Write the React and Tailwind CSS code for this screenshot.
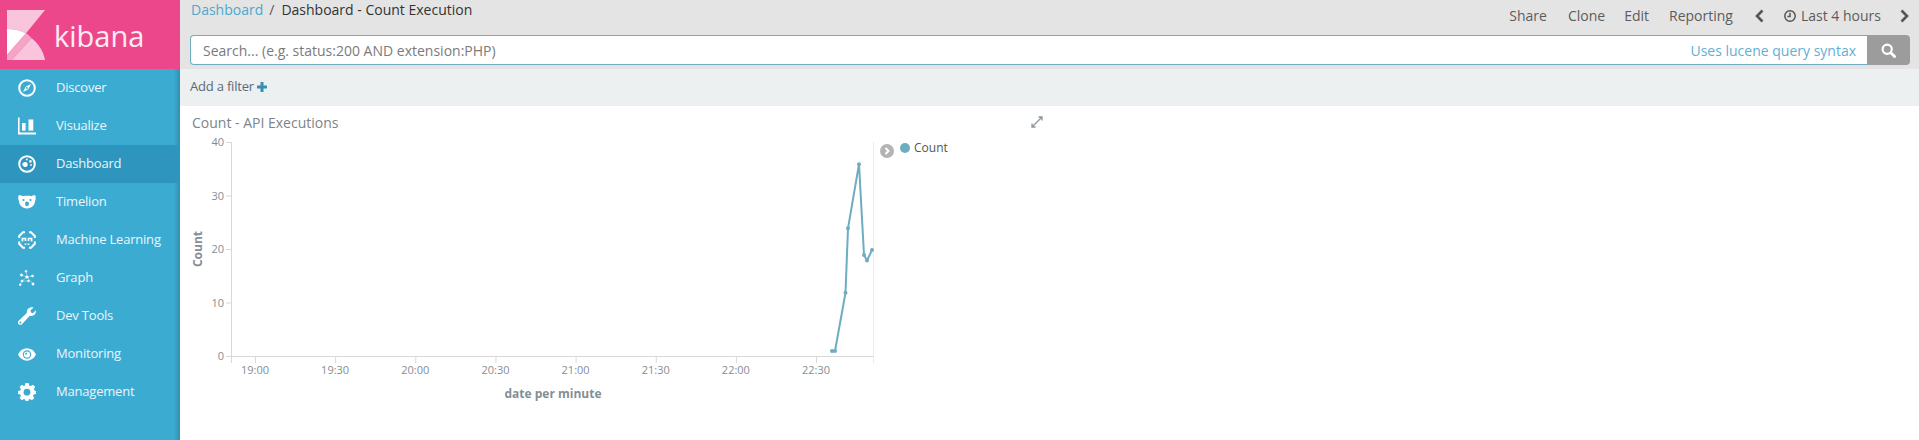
import React from "react";

const Compass = () => (
  <svg width="18" height="18" viewBox="0 0 18 18" fill="none">
    <circle cx="9" cy="9" r="7.8" stroke="#fff" strokeWidth="2" />
    <path d="M13 5 L10.3 10.3 L5 13 L7.7 7.7 Z" fill="#fff" />
    <circle cx="9" cy="9" r="1" fill="#3cabd2" />
  </svg>
);
const Bars = () => (
  <svg width="18" height="18" viewBox="0 0 18 18" fill="#fff">
    <path d="M0 0.5h1.6V15.6H18V17.4H0Z" />
    <rect x="4" y="6" width="3.6" height="7.6" />
    <rect x="10.5" y="2.5" width="4.8" height="11.1" />
  </svg>
);
const Gauge = () => (
  <svg width="18" height="18" viewBox="0 0 18 18" fill="none">
    <circle cx="9" cy="9" r="7.8" stroke="#fff" strokeWidth="2" />
    <path d="M4.4 8.2 L6.6 7 C8.4 6.6 10 8 9.7 10 C9.4 11.6 7.6 12.6 6 11.8 C4.6 11 4.2 9.4 4.4 8.2Z" fill="#fff" />
    <circle cx="8.8" cy="4.6" r="1" fill="#fff" />
    <circle cx="12.4" cy="6.4" r="1.3" fill="#fff" />
    <circle cx="13" cy="10" r="0.9" fill="#fff" />
  </svg>
);
const Bear = () => (
  <svg width="18" height="14" viewBox="0 0 18 14" fill="#fff">
    <path d="M0.5 0.5 C2 -0.2 3.5 0.3 4.5 1.2 C7 0.6 11 0.6 13.5 1.2 C14.5 0.3 16 -0.2 17.5 0.5 C18 3 17.6 5 17 6 C17 9.5 14 13.5 9 13.5 C4 13.5 1 9.5 1 6 C0.4 5 0 3 0.5 0.5Z" />
    <circle cx="5.5" cy="5" r="1.1" fill="#3cabd2" />
    <circle cx="12.5" cy="5" r="1.1" fill="#3cabd2" />
    <ellipse cx="9" cy="8.8" rx="2" ry="2.4" fill="#3cabd2" />
  </svg>
);
const Brain = () => (
  <svg width="18" height="18" viewBox="0 0 18 18" fill="none" stroke="#fff" strokeWidth="2" strokeLinecap="butt">
    <path d="M7 1.3 H5 L1.2 5 V7 M1.2 10.5 V12.8 L5 16.7 H7" />
    <path d="M11 1.3 H13 L16.8 5 V7 M16.8 10.5 V12.8 L13 16.7 H11" />
    <path d="M4.4 10.5 V7.5 H7.5 V10 M13.6 10.5 V7.5 H10.5 V10 M7.5 12.5 V14 M10.5 12.5 V14" strokeWidth="1.7" />
  </svg>
);
const GraphIcon = () => (
  <svg width="16" height="16" viewBox="0 0 16 16" fill="#fff" stroke="#fff" strokeWidth="0.5">
    <path d="M7 1 L8 7 L2.5 5 M8 7 L13 6 M8 7 L3 11 L1 15 M8 7 L14 14 M3 11 L9 11" fill="none" strokeOpacity="0.8" />
    <circle cx="7" cy="1.3" r="1" />
    <circle cx="2.5" cy="5" r="1.2" />
    <circle cx="8" cy="7" r="1.3" />
    <circle cx="13.5" cy="6" r="1.1" />
    <circle cx="3" cy="11" r="1.1" />
    <circle cx="9.5" cy="11" r="0.9" />
    <circle cx="1.2" cy="14.7" r="1" />
    <circle cx="14" cy="14" r="1.2" />
  </svg>
);
const Wrench = () => (
  <svg width="18" height="18" viewBox="0 0 18 18" fill="#fff">
    <path d="M12.9 0.3 C14 0.1 15 0.3 15.6 0.6 L12.4 3.6 L13 5.6 L15 6.2 L17.8 3.2 C18.2 5 17.6 6.8 16.2 8 C14.8 9.1 13.1 9.2 11.8 8.8 L4.2 17 C3 18.3 1 18 0.3 16.8 C-0.3 15.8 -0.1 14.6 0.7 13.8 L8.8 6.1 C8.4 3.4 10 0.9 12.9 0.3Z" />
    <circle cx="2.4" cy="15.6" r="1" fill="#3cabd2" />
  </svg>
);
const Eye = () => (
  <svg width="18" height="13" viewBox="0 0 18 13" fill="#fff">
    <path d="M0 6.5 C2 2.5 5.2 0.3 9 0.3 C12.8 0.3 16 2.5 18 6.5 C16 10.5 12.8 12.7 9 12.7 C5.2 12.7 2 10.5 0 6.5Z" />
    <circle cx="9" cy="6.5" r="4.2" fill="#3cabd2" />
    <circle cx="9" cy="6.5" r="3.1" fill="#fff" />
    <path d="M9 4.6 A1.9 1.9 0 0 0 7.1 6.5 L9 6.5Z" fill="#3cabd2" />
  </svg>
);
const Gear = () => (
  <svg width="18" height="18" viewBox="0 0 18 18" fill="#fff">
    <path fillRule="evenodd" d="M7.3 0 H10.7 L11.2 2.4 L12.9 3.1 L15 1.8 L17.2 4.1 L15.9 6.1 L16.6 7.8 L18 8 V11 L15.7 11.4 L15 13 L16.3 15.1 L14 17.3 L12 16 L10.8 16.5 L10.4 18 H7.6 L7.1 16.4 L5.8 15.9 L3.9 17.3 L1.6 15 L2.9 13 L2.3 11.4 L0 11 V8 L2.3 7.6 L2.9 6 L1.6 4 L3.9 1.7 L5.9 3 L6.9 2.5 Z M9 5.8 A3.4 3.4 0 1 0 9 12.6 A3.4 3.4 0 1 0 9 5.8Z" />
  </svg>
);

const navItems = [
  ["Discover", Compass],
  ["Visualize", Bars],
  ["Dashboard", Gauge, true],
  ["Timelion", Bear],
  ["Machine Learning", Brain],
  ["Graph", GraphIcon],
  ["Dev Tools", Wrench],
  ["Monitoring", Eye],
  ["Management", Gear],
];

const Logo = () => (
  <svg width="40" height="52" viewBox="0 0 40 52">
    <path d="M1 1 H39 L20 24.3 C14 21.5 8 20 1 20Z" fill="#f9c5dc" />
    <path d="M1 20 C8 20 14 21.5 20 24.3 L1 46Z" fill="#fff" />
    <path d="M20 24.3 C22 25.5 24 27.3 25.7 29.3 L5.7 51 H1 V46Z" fill="#f5a3c6" />
    <path d="M25.7 29.3 C32 34.5 37.5 42 39 51 H5.7Z" fill="#f9c5dc" />
  </svg>
);

const yTicks = [[40, 142], [30, 195.5], [20, 249], [10, 302.5], [0, 356]];
const xTicks = ["19:00", "19:30", "20:00", "20:30", "21:00", "21:30", "22:00", "22:30"];
const pts = [[832, 351], [835, 351], [845.5, 292.7], [848, 228.3], [859, 164.2], [864, 255], [867, 260.5], [872, 250]];

const Chart = () => (
  <svg width="700" height="290" viewBox="180 120 700 290" className="block shrink-0" fontFamily="'Open Sans', sans-serif">
    <g stroke="#d9d9d9" strokeWidth="1" fill="none">
      <path d="M231.5 142 V363" />
      <path d="M873.5 142 V363" stroke="#ececec" />
      <path d="M231.5 356.5 H873.5" />
      {yTicks.map(([v, y]) => (
        <path key={v} d={`M226 ${y + 0.5} H231`} />
      ))}
      {xTicks.map((t, i) => (
        <path key={t} d={`M${255.5 + i * 80.15} 357 V363`} />
      ))}
    </g>
    <g fill="#848e96" fontSize="11">
      {yTicks.map(([v, y]) => (
        <text key={v} x="224" y={y + 4} textAnchor="end">{v}</text>
      ))}
      {xTicks.map((t, i) => (
        <text key={t} x={255 + i * 80.15} y="374" textAnchor="middle">{t}</text>
      ))}
    </g>
    <text x="0" y="0" transform="translate(202 249) rotate(-90)" textAnchor="middle" fontSize="12" fontWeight="700" fill="#848e96">Count</text>
    <text x="553" y="398" textAnchor="middle" fontSize="12" fontWeight="700" fill="#848e96">date per minute</text>
    <polyline points={pts.map((p) => p.join(",")).join(" ")} fill="none" stroke="#6eadc1" strokeWidth="2" strokeLinejoin="round" />
    {pts.map((p, i) => (
      <circle key={i} cx={p[0]} cy={p[1]} r="2" fill="#6eadc1" />
    ))}
  </svg>
);

export default function App() {
  return (
    <div className="flex h-[440px] w-full overflow-hidden bg-white font-['Open_Sans',sans-serif] text-[14px]">
      <aside className="z-10 flex w-[180px] shrink-0 flex-col bg-[#3cabd2] shadow-[inset_-6px_0_5px_-4px_rgba(0,0,0,0.22)]">
        <div className="flex h-[69px] items-center bg-[#ec478b] pl-[6px]">
          <Logo />
          <span className="ml-[8px] pt-[1px] text-[29px] leading-none text-white/90">kibana</span>
        </div>
        {navItems.map(([label, Icon, active]) => (
          <div key={label} className={`flex h-[38px] items-center text-[13px] tracking-[-0.2px] text-[#eaf6fb] ${active ? "bg-[#2d95be]" : ""}`}>
            <div className="flex w-[56px] items-center justify-center pr-[2px]">
              <Icon />
            </div>
            <span className="pb-[1px]">{label}</span>
          </div>
        ))}
      </aside>
      <main className="flex min-w-0 flex-1 flex-col">
        <div className="h-[69px] shrink-0 bg-[#e4e4e4]">
          <div className="flex h-[35px] items-start justify-between text-[#444]">
            <div className="flex items-center pl-[11px] leading-[19px]">
              <span className="text-[#4da8cd]">Dashboard</span>
              <span className="ml-[6px] mr-[7px] text-[#555]">/</span>
              <span className="text-[#333]">Dashboard - Count Execution</span>
            </div>
            <div className="flex items-center pt-[6px] leading-[19px] text-[#5c5c5c]">
              <span>Share</span>
              <span className="ml-[21px]">Clone</span>
              <span className="ml-[19px]">Edit</span>
              <span className="ml-[20px]">Reporting</span>
              <svg className="ml-[22px]" width="9" height="14" viewBox="0 0 9 14" fill="none" stroke="#555" strokeWidth="2.6"><path d="M7.5 1.5 L2 7 L7.5 12.5" /></svg>
              <svg className="ml-[20px]" width="12" height="12" viewBox="0 0 12 12" fill="none" stroke="#555" strokeWidth="1.5"><circle cx="6" cy="6" r="5.2" /><path d="M6 2.8 V6.5 H3.4" /></svg>
              <span className="ml-[5px]">Last 4 hours</span>
              <svg className="ml-[19px] mr-[10px]" width="9" height="14" viewBox="0 0 9 14" fill="none" stroke="#555" strokeWidth="2.6"><path d="M1.5 1.5 L7 7 L1.5 12.5" /></svg>
            </div>
          </div>
          <div className="mx-[10px] mr-[9px] flex h-[30px]">
            <div className="flex min-w-0 flex-1 items-center justify-between rounded-l-[4px] border border-r-0 border-[#6eadc1] bg-white pl-[12px] pr-[11px]">
              <span className="text-[#7b7b7b]">Search... (e.g. status:200 AND extension:PHP)</span>
              <span className="text-[#5fb0d4]">Uses lucene query syntax</span>
            </div>
            <div className="flex w-[43px] items-center justify-center rounded-r-[4px] bg-[#9c9c9c]">
              <svg width="15" height="15" viewBox="0 0 15 15" fill="none" stroke="#fff"><circle cx="6.2" cy="6.2" r="4.6" strokeWidth="2.2" /><path d="M9.8 9.8 L13.6 13.6" strokeWidth="2.8" strokeLinecap="round" /></svg>
            </div>
          </div>
        </div>
        <div className="flex h-[37px] shrink-0 items-center bg-[#ecf0f1] pb-[1px] pl-[10px] text-[13px] tracking-[-0.2px] text-[#5a6b75]">
          <span>Add a filter</span>
          <svg className="ml-[3px]" width="10" height="10" viewBox="0 0 10 10" fill="#3a8fb0"><path d="M3.5 0 H6.5 V3.5 H10 V6.5 H6.5 V10 H3.5 V6.5 H0 V3.5 H3.5Z" /></svg>
        </div>
        <div className="relative flex-1">
          <div className="pl-[12px] pt-[7px] leading-[19px] text-[#7b858c]">Count - API Executions</div>
          <div className="absolute left-0 top-[14px] flex items-start">
            <Chart />
            <div className="flex items-center pt-[20px] text-[12px] leading-[16px] text-[#555]">
              <span className="flex h-[14px] w-[14px] translate-y-[3px] items-center justify-center rounded-full bg-[#b4b4b4]">
                <svg width="7" height="8" viewBox="0 0 7 8" fill="none" stroke="#fff" strokeWidth="2"><path d="M1.5 1 L4.5 4 L1.5 7" /></svg>
              </span>
              <span className="ml-[6px] h-[10px] w-[10px] rounded-full bg-[#6eadc1]" />
              <span className="ml-[4px]">Count</span>
            </div>
          </div>
          <svg className="absolute left-[851px] top-[10px]" width="12" height="12" viewBox="0 0 12 12" fill="none" stroke="#8b979f" strokeWidth="1.3">
            <path d="M1 11 L11 1 M7.5 1 H11 V4.5 M1 7.5 V11 H4.5" />
          </svg>
        </div>
      </main>
    </div>
  );
}
